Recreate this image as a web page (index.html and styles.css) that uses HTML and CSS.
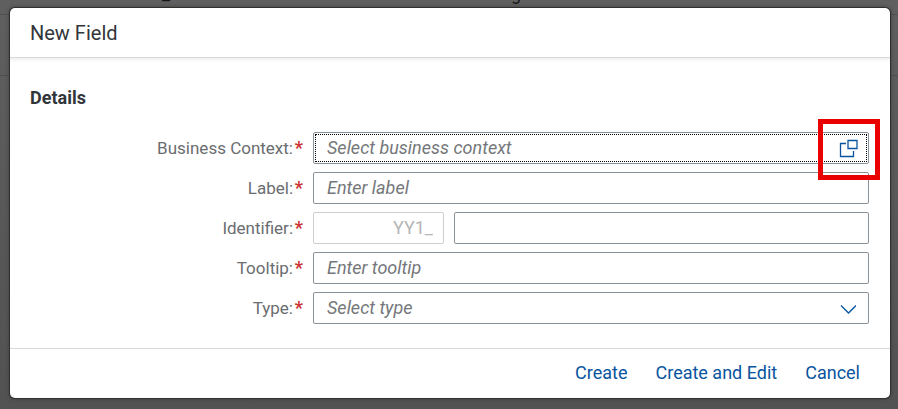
FILE: index.html
```html
<!DOCTYPE html>
<html lang="en">
<head>
<meta charset="utf-8">
<title>New Field</title>
<link rel="stylesheet" href="styles.css">
</head>
<body>
<div class="backdrop" aria-hidden="true">
  <span class="backdrop-text backdrop-text-start">_</span>
  <span class="backdrop-text backdrop-text-end">g</span>
</div>
<form class="dialog" role="dialog" aria-labelledby="dialog-title">
  <header class="dialog-header">
    <h1 id="dialog-title">New Field</h1>
  </header>
  <main class="dialog-body">
    <h2>Details</h2>
    <div class="fields">
      <label for="context">Business Context:<span class="required">*</span></label>
      <div class="control focused">
        <input id="context" type="text" placeholder="Select business context">
        <button class="value-help" type="button" aria-label="Open value help">
          <svg width="20" height="20" viewBox="0 0 20 20" fill="none" stroke="currentColor" stroke-width="1.3">
            <path d="M8 5.5H2.5V18.5H15.5V13"/>
            <path d="M10 2.5H19V10.5H10Z"/>
          </svg>
        </button>
        <span class="highlight"></span>
      </div>

      <label for="label">Label:<span class="required">*</span></label>
      <div class="control">
        <input id="label" type="text" placeholder="Enter label">
      </div>

      <label for="identifier">Identifier:<span class="required">*</span></label>
      <div class="identifier">
        <div class="control disabled">
          <input type="text" value="YY1_" aria-label="Identifier prefix" disabled>
        </div>
        <div class="control">
          <input id="identifier" type="text">
        </div>
      </div>

      <label for="tooltip">Tooltip:<span class="required">*</span></label>
      <div class="control">
        <input id="tooltip" type="text" placeholder="Enter tooltip">
      </div>

      <label for="type">Type:<span class="required">*</span></label>
      <div class="control">
        <select id="type">
          <option>Select type</option>
        </select>
        <svg class="arrow" width="16" height="10" viewBox="0 0 16 10" fill="none" stroke="currentColor" stroke-width="1.3">
          <path d="M1 1.5L8.5 9L16 1.5"/>
        </svg>
      </div>
    </div>
  </main>
  <footer class="dialog-footer">
    <button type="button">Create</button>
    <button type="button">Create and Edit</button>
    <button type="button">Cancel</button>
  </footer>
</form>
</body>
</html>
```
FILE: styles.css
```css
* {
  box-sizing: border-box;
}

body {
  margin: 0;
  min-height: 100vh;
  padding: 8px 8px 11px 10px;
  display: flex;
  background: linear-gradient(#5f5f5f, #525252);
  font-family: Roboto, "Liberation Sans", sans-serif;
  font-size: 17px;
  color: #32363a;
}

/* Page content that stays visible behind the dialog */
.backdrop {
  position: absolute;
  inset: 0;
  overflow: hidden;
  background:
    linear-gradient(#505050, #505050) 0 14px / 100% 1px no-repeat,
    linear-gradient(#505050, #505050) 0 75px / 100% 1px no-repeat;
}

.backdrop-text {
  position: absolute;
  top: -16px;
  line-height: 20px;
  font-size: 18px;
  color: #15181b;
}

.backdrop-text-start {
  left: 162px;
}

.backdrop-text-end {
  left: 511px;
}

.dialog {
  position: relative;
  flex: 1;
  display: flex;
  flex-direction: column;
  background: #fff;
  border-radius: 5px;
  box-shadow: 0 0 0 1px #303030, 0 0 4px #303030;
}

.dialog-header {
  padding: 13px 20px 12px;
  border-bottom: 1px solid #d9d9d9;
  box-shadow: 0 2px 3px #00000010;
}

h1,
h2 {
  margin: 0;
  line-height: 24px;
}

h1 {
  font-size: 20px;
  font-weight: 400;
}

h2 {
  font-size: 18px;
  font-weight: 700;
}

.dialog-body {
  flex: 1;
  padding: 28px 21px 24px 20px;
}

.fields {
  margin-top: 22px;
  display: grid;
  grid-template-columns: minmax(0, 273px) 1fr;
  gap: 8px 10px;
}

label {
  line-height: 32px;
  font-size: 17px;
  text-align: right;
  color: #6a6d70;
}

.required {
  display: inline-block;
  width: 10px;
  padding-left: 1px;
  font-size: 18px;
  font-weight: 700;
  color: #c33;
}

.control {
  position: relative;
  display: flex;
  min-width: 0;
  height: 32px;
  border: 1px solid #89919a;
  border-radius: 2px;
  background: #fff;
}

.focused {
  z-index: 1;
  outline: 1px dotted #000;
  outline-offset: -3px;
}

.disabled {
  border-color: #ccced0;
}

.identifier {
  display: grid;
  grid-template-columns: 131px 1fr;
  gap: 10px;
}

input,
select {
  flex: 1;
  min-width: 0;
  width: 100%;
  padding: 0 13px 2px;
  border: 0;
  outline: 0;
  background: transparent;
  appearance: none;
  font: inherit;
  font-size: 18px;
  color: #32363a;
}

select,
input::placeholder {
  font-style: italic;
  color: #74777a;
  opacity: 1;
}

input:disabled {
  padding-right: 10px;
  text-align: right;
  color: #b5b6b7;
}

button {
  padding: 0;
  border: 0;
  background: transparent;
  font: inherit;
  font-size: 18px;
  color: #0854a0;
}

.value-help {
  width: 40px;
  display: flex;
  align-items: center;
  justify-content: center;
}

.arrow {
  position: absolute;
  right: 12px;
  top: 11px;
  color: #0854a0;
  pointer-events: none;
}

/* Callout frame around the value help button */
.highlight {
  position: absolute;
  top: -14px;
  right: -12px;
  width: 62px;
  height: 61px;
  border: 5px solid #e90000;
  pointer-events: none;
}

.dialog-footer {
  padding: 0 30px 2px;
  min-height: 50px;
  border-top: 1px solid #d9d9d9;
  display: flex;
  align-items: center;
  justify-content: flex-end;
  gap: 28px;
}
```
